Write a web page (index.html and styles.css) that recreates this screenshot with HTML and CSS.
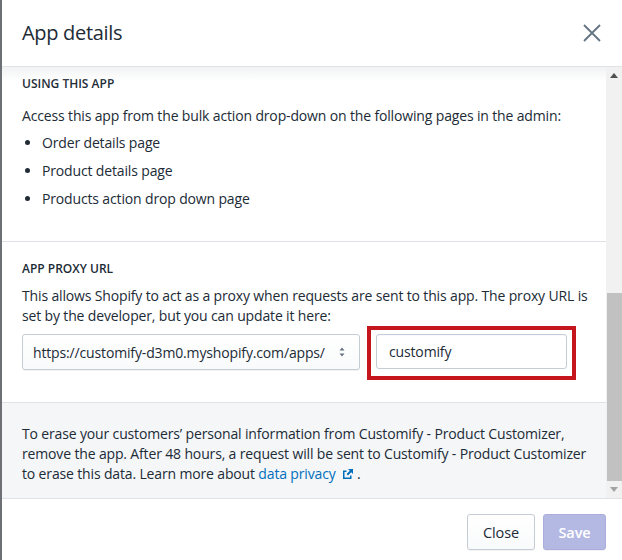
FILE: index.html
```html
<!DOCTYPE html>
<html>
<head>
<meta charset="utf-8">
<link rel="stylesheet" href="styles.css">
</head>
<body>
<div class="modal">
  <header class="head">
    <h2 class="title">App details</h2>
    <button class="close" aria-label="Close">
      <svg width="20" height="20" viewBox="0 0 20 20"><path d="M2 2 L18 18 M18 2 L2 18" stroke="#637381" stroke-width="1.8" fill="none"/></svg>
    </button>
  </header>
  <div class="body">
    <div class="scroll">
      <section class="sec sec1">
        <h3 class="sub">Using this app</h3>
        <p class="txt">Access this app from the bulk action drop-down on the following pages in the admin:</p>
        <ul class="list">
          <li>Order details page</li>
          <li>Product details page</li>
          <li>Products action drop down page</li>
        </ul>
      </section>
      <section class="sec sec2">
        <h3 class="sub">App proxy URL</h3>
        <p class="txt">This allows Shopify to act as a proxy when requests are sent to this app. The proxy URL is set by the developer, but you can update it here:</p>
        <div class="row">
          <div class="select">
            <span>https://customify-d3m0.myshopify.com/apps/</span>
            <svg class="caret" width="10" height="14" viewBox="0 0 10 14"><path d="M5 2.5 L7.5 5.5 H2.5 Z M5 11.5 L2.5 8.5 H7.5 Z" fill="#637381"/></svg>
          </div>
          <div class="field">
            <div class="input">customify</div>
            <div class="mark"></div>
          </div>
        </div>
      </section>
      <section class="sec sec3">
        <p class="txt">To erase your customers’ personal information from Customify - Product Customizer, remove the app. After 48 hours, a request will be sent to Customify - Product Customizer to erase this data. Learn more about <a class="link" href="#">data privacy<svg width="12" height="12" viewBox="0 0 12 12"><path d="M1 2.5 V11 H9.5 V7.5 H8 V9.5 H2.5 V4 H4.5 V2.5 Z" fill="#006fbb"/><path d="M6 1 H11 V6 L9.2 4.2 L6 7.4 L4.6 6 L7.8 2.8 Z" fill="#006fbb"/></svg></a> .</p>
      </section>
      <div class="shadow"></div>
    </div>
    <div class="sbar">
      <div class="arr"><svg width="8" height="5" viewBox="0 0 8 5"><path d="M0 5 L4 0 L8 5 Z" fill="#505050"/></svg></div>
      <div class="track"><div class="thumb"></div></div>
      <div class="arr"><svg width="8" height="5" viewBox="0 0 8 5"><path d="M0 0 L8 0 L4 5 Z" fill="#a3a3a3"/></svg></div>
    </div>
  </div>
  <footer class="foot">
    <button class="btn">Close</button>
    <button class="btn primary">Save</button>
  </footer>
</div>
</body>
</html>
```
FILE: styles.css
```css
html, body { margin: 0; padding: 0; }
body {
  background: #6d7175;
  width: 622px;
  height: 560px;
  overflow: hidden;
  font-family: "Open Sans", "Noto Sans", sans-serif;
  color: #212b36;
  letter-spacing: -0.15px;
}
.modal {
  margin-left: 2px;
  width: 620px;
  height: 560px;
  background: #fff;
  display: flex;
  flex-direction: column;
}
.head {
  height: 66px;
  border-bottom: 1px solid #dfe3e8;
  display: flex;
  align-items: center;
  justify-content: space-between;
  padding: 0 20px;
  box-sizing: content-box;
}
.title {
  margin: 0 0 1px;
  font-size: 20px;
  font-weight: 400;
  letter-spacing: -0.3px;
}
.close {
  border: 0;
  background: none;
  padding: 0;
  width: 20px;
  height: 20px;
}
.body {
  height: 431px;
  display: flex;
}
.scroll {
  flex: 1;
  position: relative;
  overflow: hidden;
}
.shadow {
  position: absolute;
  left: 0; right: 0; top: 0;
  height: 14px;
  background: linear-gradient(#f1f2f3, rgba(255,255,255,0));
}
.sec {
  padding: 0 10px 0 20px;
  border-bottom: 1px solid #dfe3e8;
}
.sec1 { padding-top: 9px; padding-bottom: 32px; }
.sec2 { padding-top: 19px; padding-bottom: 32px; }
.sec3 { padding-top: 21px; padding-bottom: 14px; background: #f4f6f8; border-bottom: 0; }
.sub {
  margin: 0 0 14px;
  font-size: 12px;
  line-height: 16px;
  font-weight: 600;
  text-transform: uppercase;
  letter-spacing: 0;
}
.sec2 .sub { margin-bottom: 9px; }
.txt {
  margin: 0;
  font-size: 14px;
  line-height: 20px;
}
.list {
  margin: 7px 0 0;
  padding-left: 20px;
  font-size: 14px;
  line-height: 20px;
}
.list li { margin-bottom: 8px; }
.list li:last-child { margin-bottom: 0; }
.row {
  display: flex;
  gap: 16px;
  margin-top: 8px;
}
.select {
  width: 338px;
  height: 36px;
  box-sizing: border-box;
  border: 1px solid #c4cdd5;
  border-radius: 3px;
  background: linear-gradient(#fff, #f9fafb);
  box-shadow: 0 1px 0 rgba(22,29,37,.05);
  display: flex;
  align-items: center;
  justify-content: space-between;
  padding: 0 12px 0 10px;
  font-size: 14px;
}
.field { position: relative; }
.input {
  width: 191px;
  height: 35px;
  box-sizing: border-box;
  border: 1px solid #c4cdd5;
  border-radius: 3px;
  background: #fff;
  box-shadow: inset 0 1px 0 rgba(99,115,129,.05);
  padding: 0 12px;
  display: flex;
  align-items: center;
  font-size: 14px;
}
.mark {
  position: absolute;
  left: -9px; top: -8px; right: -9px; bottom: -10px;
  border: 4px solid #c4161c;
}
.link { color: #006fbb; text-decoration: none; }
.link svg { vertical-align: -1px; margin-left: 6px; }
.sbar {
  width: 16px;
  background: #f1f1f1;
  display: flex;
  flex-direction: column;
}
.arr {
  height: 17px;
  display: flex;
  align-items: center;
  justify-content: center;
}
.track { flex: 1; position: relative; }
.thumb {
  position: absolute;
  left: 1px; right: 0;
  top: 209px;
  bottom: 0;
  background: #c1c1c1;
}
.foot {
  flex: 1;
  border-top: 1px solid #dfe3e8;
  display: flex;
  justify-content: flex-end;
  align-items: flex-start;
  gap: 8px;
  padding: 15px 16px 0 0;
}
.btn {
  width: 68px;
  height: 36px;
  padding: 0;
  border: 1px solid #c4cdd5;
  border-radius: 3px;
  background: linear-gradient(#fff, #f9fafb);
  box-shadow: 0 1px 0 rgba(22,29,37,.05);
  font-family: inherit;
  font-size: 14.5px;
  color: #212b36;
  letter-spacing: -0.1px;
}
.primary {
  width: 63px;
  background: #b4b9e3;
  border-color: #a9aedc;
  color: #fff;
  font-weight: 600;
}
```
